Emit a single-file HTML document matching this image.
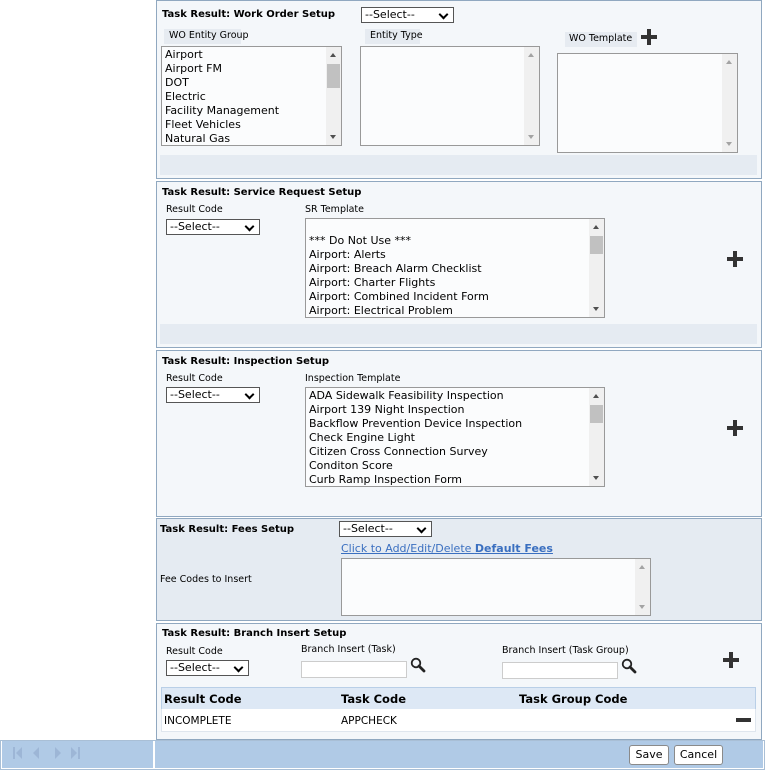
<!DOCTYPE html>
<html><head><meta charset="utf-8"><style>
*{box-sizing:border-box;margin:0;padding:0}
body{width:765px;height:770px;background:#fff;position:relative;overflow:hidden;font-family:"DejaVu Sans","Liberation Sans",sans-serif;font-size:10px;color:#000}
.a{position:absolute}
.panel{position:absolute;left:156px;width:606px;border:1px solid #90a8c0;background:#f4f7fa}
.t{position:absolute;font-weight:bold;font-size:10px;white-space:nowrap}
.lbl{position:absolute;font-size:9.5px;white-space:nowrap}
.sel{position:absolute;border:1px solid #555;background:#fff;font-size:11px;padding-left:3px;line-height:14px;height:16px}
.sel:after{content:"";position:absolute;right:6px;top:3px;width:5px;height:5px;border-right:2px solid #000;border-bottom:2px solid #000;transform:rotate(45deg)}
.lb{position:absolute;border:1px solid #999;background:#fbfcfd;font-size:11px;line-height:14px;padding-left:3px;overflow:hidden;white-space:nowrap}
.sb{position:absolute;right:0;top:0;bottom:0;width:15px;background:#f0f0f0}
.sb:before{content:"";position:absolute;left:4px;top:6px;border:3.5px solid transparent;border-bottom:4px solid #a3a3a3;border-top:0}
.sb:after{content:"";position:absolute;left:4px;bottom:6px;border:3.5px solid transparent;border-top:4px solid #a3a3a3;border-bottom:0}
.dk .sb:before{border-bottom-color:#505050}.dk .sb:after{border-top-color:#505050}
.th{position:absolute;right:1px;width:13px;background:#c1c1c1}
.plus{position:absolute;width:16px;height:16px}
.plus:before{content:"";position:absolute;left:6px;top:0;width:4px;height:16px;background:#333}
.plus:after{content:"";position:absolute;left:0;top:6px;width:16px;height:4px;background:#333}
.strip{position:absolute;background:#e5ebf2}
.inp{position:absolute;border:1px solid #ccc;background:#fff}
.mag{position:absolute;width:16px;height:16px}
</style></head><body>

<!-- WO panel -->
<div class="panel" style="top:0;height:179px"></div>
<div class="t" style="left:162px;top:9px">Task Result: Work Order Setup</div>
<div class="sel" style="left:361px;top:7px;width:93px">--Select--</div>
<div class="lbl" style="left:164px;top:29px;width:77px;height:15px;background:#e6ebf1;padding-left:5px;padding-top:1px">WO Entity Group</div>
<div class="lbl" style="left:365px;top:29px;width:55px;height:15px;background:#e6ebf1;padding-left:5px;padding-top:1px">Entity Type</div>
<div class="lbl" style="left:565px;top:32px;width:72px;height:15px;background:#e6ebf1;padding-left:4px;padding-top:1px">WO Template</div>
<div class="plus" style="left:641px;top:29px"></div>
<div class="lb dk" style="left:161px;top:46px;width:181px;height:100px;padding-top:1px">Airport<br>Airport FM<br>DOT<br>Electric<br>Facility Management<br>Fleet Vehicles<br>Natural Gas<div class="sb"></div><div class="th" style="top:17px;height:24px"></div></div>
<div class="lb" style="left:360px;top:46px;width:180px;height:100px"><div class="sb"></div></div>
<div class="lb" style="left:557px;top:53px;width:181px;height:100px"><div class="sb"></div></div>
<div class="strip" style="left:160px;top:155px;width:597px;height:20px"></div>

<!-- SR panel -->
<div class="panel" style="top:181px;height:167px"></div>
<div class="t" style="left:162px;top:187px">Task Result: Service Request Setup</div>
<div class="lbl" style="left:166px;top:204px">Result Code</div>
<div class="sel" style="left:166px;top:219px;width:94px">--Select--</div>
<div class="lbl" style="left:305px;top:204px">SR Template</div>
<div class="lb dk" style="left:305px;top:218px;width:300px;height:100px;padding-top:15px">*** Do Not Use ***<br>Airport: Alerts<br>Airport: Breach Alarm Checklist<br>Airport: Charter Flights<br>Airport: Combined Incident Form<br>Airport: Electrical Problem<div class="sb"></div><div class="th" style="top:17px;height:18px"></div></div>
<div class="plus" style="left:727px;top:251px"></div>
<div class="strip" style="left:160px;top:324px;width:597px;height:20px"></div>

<!-- Inspection panel -->
<div class="panel" style="top:350px;height:167px"></div>
<div class="t" style="left:162px;top:356px">Task Result: Inspection Setup</div>
<div class="lbl" style="left:166px;top:373px">Result Code</div>
<div class="sel" style="left:166px;top:387px;width:94px">--Select--</div>
<div class="lbl" style="left:305px;top:373px">Inspection Template</div>
<div class="lb dk" style="left:305px;top:387px;width:300px;height:100px;padding-top:1px">ADA Sidewalk Feasibility Inspection<br>Airport 139 Night Inspection<br>Backflow Prevention Device Inspection<br>Check Engine Light<br>Citizen Cross Connection Survey<br>Conditon Score<br>Curb Ramp Inspection Form<div class="sb"></div><div class="th" style="top:17px;height:18px"></div></div>
<div class="plus" style="left:727px;top:420px"></div>

<!-- Fees panel -->
<div class="panel" style="top:518px;height:103px;background:#e5ebf2"></div>
<div class="t" style="left:160px;top:524px">Task Result: Fees Setup</div>
<div class="sel" style="left:339px;top:521px;width:93px">--Select--</div>
<div class="a" style="left:341px;top:542px;font-size:11px;color:#3a6fc0;text-decoration:underline;white-space:nowrap">Click to Add/Edit/Delete <b>Default Fees</b></div>
<div class="lbl" style="left:160px;top:574px">Fee Codes to Insert</div>
<div class="lb" style="left:341px;top:558px;width:310px;height:58px"><div class="sb"></div></div>

<!-- Branch panel -->
<div class="panel" style="top:623px;height:117px"></div>
<div class="t" style="left:162px;top:628px">Task Result: Branch Insert Setup</div>
<div class="lbl" style="left:166px;top:646px">Result Code</div>
<div class="sel" style="left:166px;top:660px;width:83px">--Select--</div>
<div class="lbl" style="left:301px;top:644px">Branch Insert (Task)</div>
<div class="inp" style="left:301px;top:661px;width:106px;height:17px"></div>
<svg class="mag" style="left:410px;top:657px" viewBox="0 0 16 16"><circle cx="6" cy="6" r="4.3" fill="none" stroke="#222" stroke-width="1.8"/><path d="M9 9l5 5" stroke="#222" stroke-width="2.8" stroke-linecap="round"/></svg>
<div class="lbl" style="left:502px;top:645px">Branch Insert (Task Group)</div>
<div class="inp" style="left:502px;top:662px;width:116px;height:17px"></div>
<svg class="mag" style="left:621px;top:658px" viewBox="0 0 16 16"><circle cx="6" cy="6" r="4.3" fill="none" stroke="#222" stroke-width="1.8"/><path d="M9 9l5 5" stroke="#222" stroke-width="2.8" stroke-linecap="round"/></svg>
<div class="plus" style="left:723px;top:652px"></div>
<div class="a" style="left:161px;top:687px;width:595px;height:23px;background:#dde8f5;border:1px solid #b9cfe7"></div>
<div class="a" style="left:161px;top:709px;width:595px;height:23px;background:#fff;border:1px solid #dfe6ee;border-top:0"></div>
<div class="a" style="left:164px;top:692px;font-weight:bold;font-size:11.5px">Result Code</div>
<div class="a" style="left:341px;top:692px;font-weight:bold;font-size:11.5px">Task Code</div>
<div class="a" style="left:519px;top:692px;font-weight:bold;font-size:11.5px">Task Group Code</div>
<div class="a" style="left:164px;top:715px;font-size:10.5px">INCOMPLETE</div>
<div class="a" style="left:341px;top:715px;font-size:10.5px">APPCHECK</div>
<div class="a" style="left:736px;top:718px;width:15px;height:4px;background:#333"></div>

<!-- Footer -->
<div class="a" style="left:0;top:740px;width:765px;height:30px;background:#fff;border:1px solid #a9bfd6"></div>
<div class="a" style="left:2px;top:741px;width:151px;height:27px;background:#b0cae6"></div>
<div class="a" style="left:155px;top:741px;width:608px;height:27px;background:#b0cae6"></div>
<svg class="a" style="left:12px;top:744px" width="72" height="20" viewBox="0 0 72 20" fill="#9db6d6"><rect x="1" y="3" width="2" height="12"/><path d="M10 3v12l-6-6z"/><path d="M27 3v12l-6-6z"/><path d="M43 3v12l6-6z"/><path d="M59 3v12l6-6z"/><rect x="66" y="3" width="2" height="12"/></svg>
<div class="a" style="left:629px;top:745px;width:40px;height:20px;background:#fff;border:1px solid #8a8a8a;border-radius:3px;font-size:11px;text-align:center;line-height:18px">Save</div>
<div class="a" style="left:674px;top:745px;width:49px;height:20px;background:#fff;border:1px solid #8a8a8a;border-radius:3px;font-size:11px;text-align:center;line-height:18px">Cancel</div>
</body></html>
